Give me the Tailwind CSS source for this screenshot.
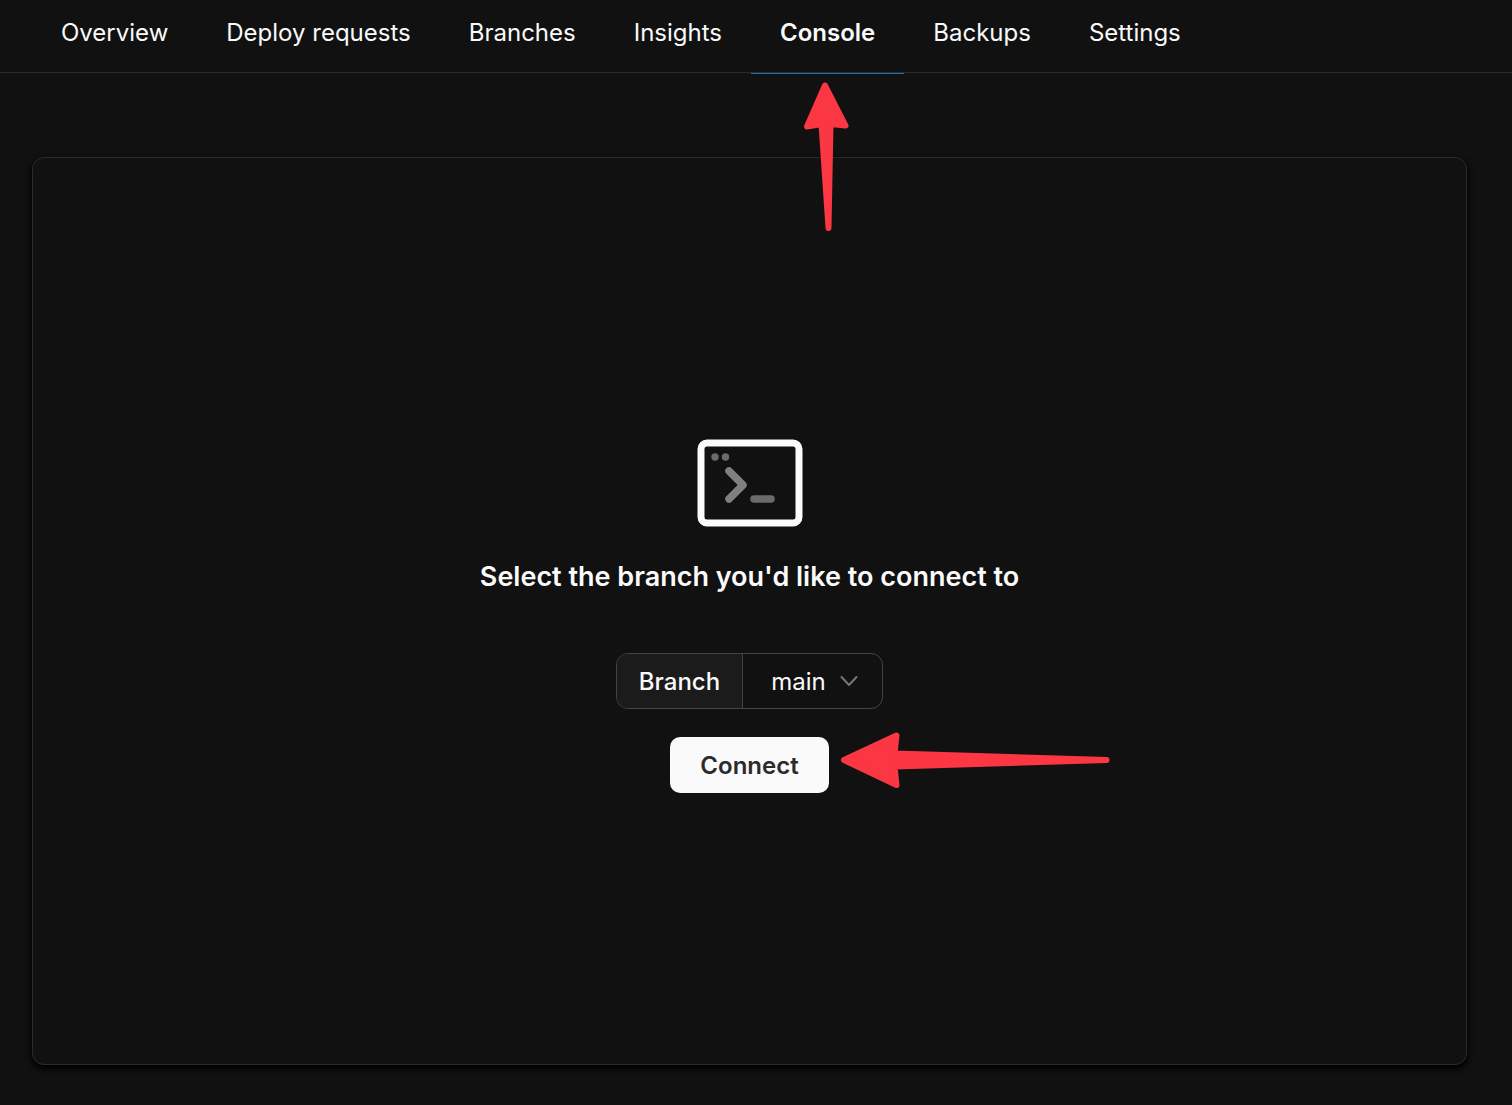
<!DOCTYPE html>
<html lang="en">
<head>
    <meta charset="UTF-8">
    <meta name="viewport" content="width=device-width, initial-scale=1.0">
    <title>Console</title>
    <script src="https://cdn.jsdelivr.net/npm/@tailwindcss/browser@4"></script>
</head>
<body class="flex min-h-screen flex-col bg-[#111111] font-['Inter',sans-serif] text-[#fafafa]">

    <!-- Tabs -->
    <nav class="border-b border-[#2b2b2b] px-8">
        <ul class="flex text-2xl leading-8">
            <li><a href="#" class="block px-[29px] pt-[17px] pb-[23px]">Overview</a></li>
            <li><a href="#" class="block px-[29px] pt-[17px] pb-[23px]">Deploy requests</a></li>
            <li><a href="#" class="block px-[29px] pt-[17px] pb-[23px]">Branches</a></li>
            <li><a href="#" class="block px-[29px] pt-[17px] pb-[23px]">Insights</a></li>
            <li class="relative">
                <a href="#" aria-current="page" class="block px-[29px] pt-[17px] pb-[23px] font-semibold">Console</a>
                <span class="absolute inset-x-0 top-full mt-px h-px bg-[#1d6fb5]"></span>
                <!-- Arrow up to the tab -->
                <svg class="absolute top-full left-12 z-10 mt-2 h-[154px] w-[52px]" viewBox="0 0 52 154" fill="#fa3743" stroke="#fa3743" stroke-width="6" stroke-linejoin="round" aria-hidden="true">
                    <path d="M26 5.500 L46.500 45.500 L31.500 44 L29.500 148 L22.500 44 L8 46.500 Z"/>
                </svg>
            </li>
            <li><a href="#" class="block px-[29px] pt-[17px] pb-[23px]">Backups</a></li>
            <li><a href="#" class="block px-[29px] pt-[17px] pb-[23px]">Settings</a></li>
        </ul>
    </nav>

    <!-- Branch picker -->
    <main class="mt-[84px] mr-[45px] mb-10 ml-8 flex flex-1 flex-col items-center justify-center rounded-xl border border-[#2b2b2b] pt-2.5 shadow-[0_3px_6px_1px_#000000]">
        <svg class="h-[88px] w-[106px]" viewBox="0 0 106 88" fill="none" aria-hidden="true">
            <rect x="4" y="4" width="98" height="80" rx="6" stroke="#fafafa" stroke-width="7"/>
            <circle cx="18" cy="18" r="3.700" fill="#6b6b6b"/>
            <circle cx="28.500" cy="18" r="3.700" fill="#6b6b6b"/>
            <path d="M32 32 L46 46 L32 60" stroke="#808080" stroke-width="7.500" stroke-linecap="round" stroke-linejoin="round"/>
            <path d="M57 60 H74" stroke="#6b6b6b" stroke-width="7.500" stroke-linecap="round"/>
        </svg>
        <h1 class="mt-8 text-[27px] leading-9 font-semibold">Select the branch you'd like to connect to</h1>

        <form class="mt-[58px] flex flex-col items-center gap-7 text-2xl leading-8">
            <div class="flex h-14 overflow-hidden rounded-xl border border-[#444444]">
                <label for="branch" class="flex items-center border-r border-[#444444] bg-[#1b1b1b] px-[22px] pt-0.5 font-medium">Branch</label>
                <div class="relative flex">
                    <select id="branch" class="w-[139px] appearance-none bg-transparent pt-0.5 pl-7">
                        <option>main</option>
                    </select>
                    <svg class="pointer-events-none absolute top-1/2 right-6 h-3 w-[18px] -translate-y-1/2" viewBox="0 0 18 12" fill="none" stroke="#777777" stroke-width="2" stroke-linecap="round" stroke-linejoin="round" aria-hidden="true">
                        <path d="M1.500 2 L9 10 L16.500 2"/>
                    </svg>
                </div>
            </div>
            <div class="relative">
                <button type="submit" class="h-14 rounded-[10px] bg-[#fafafa] px-[30px] pt-0.5 font-semibold text-[#2b2b2b]">Connect</button>
                <!-- Arrow left to the button -->
                <svg class="absolute -top-2 left-full z-10 ml-2 h-[62px] w-[276px]" viewBox="0 0 276 62" fill="#fa3743" stroke="#fa3743" stroke-width="6" stroke-linejoin="round" aria-hidden="true">
                    <path d="M7 31 L59.500 6.500 L57.500 24.500 L269.500 31 L57.500 37.500 L59.500 56 Z"/>
                </svg>
            </div>
        </form>
    </main>

</body>
</html>
